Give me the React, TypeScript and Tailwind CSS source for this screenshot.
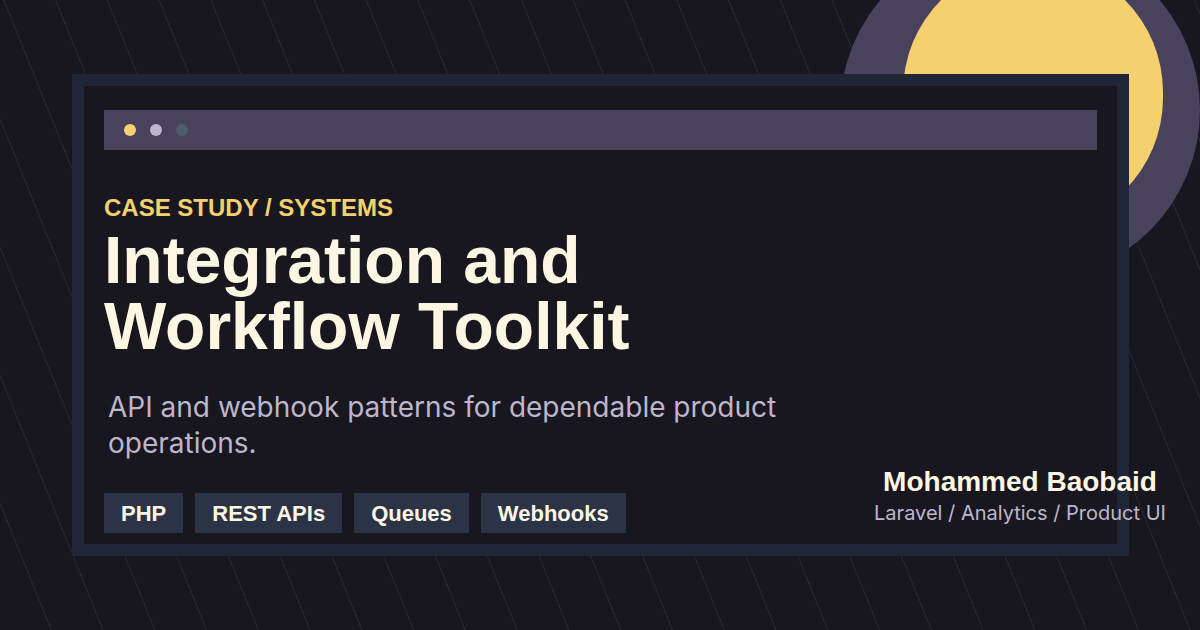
export default function App() {
    const tags = ["PHP", "REST APIs", "Queues", "Webhooks"];
    return (
        <div className="relative w-[1200px] h-[630px] overflow-hidden bg-[#18171f] bg-[repeating-linear-gradient(68deg,transparent_0px,transparent_47px,#222932_47px,#222932_48px)]">
            {/* decorative circles */}
            <div className="absolute left-[840px] top-[-60px] w-[360px] h-[340px] rounded-full bg-[#48425c]" />
            <div className="absolute left-[903px] top-[-38px] w-[260px] h-[266px] rounded-full bg-[#f4d06f]" />

            {/* card */}
            <div className="absolute left-[72px] top-[74px] w-[1057px] h-[482px] border-[12px] border-[#1f2636] bg-[#18171f] px-[20px] pt-[24px]">
                <div className="h-[40px] bg-[#48425c] flex items-center gap-[14px] pl-[20px]">
                    <span className="w-[12px] h-[12px] rounded-full bg-[#f4d06f]" />
                    <span className="w-[12px] h-[12px] rounded-full bg-[#bdb6cc]" />
                    <span className="w-[12px] h-[12px] rounded-full bg-[#4f5d6b]" />
                </div>
                <p className="mt-[43px] text-[24px] leading-[30px] font-bold text-[#f4d06f] font-[family-name:Liberation_Sans,Arial,sans-serif]">
                    CASE STUDY / SYSTEMS
                </p>
                <h1 className="mt-[4px] text-[66px] leading-[66px] font-bold text-[#fdf6e3] font-[family-name:Liberation_Sans,Arial,sans-serif]">
                    Integration and<br />Workflow Toolkit
                </h1>
                <p className="mt-[30px] ml-[4px] w-[740px] text-[28px] leading-[36px] text-[#bdb6cc] font-[family-name:Inter,sans-serif]">
                    API and webhook patterns for dependable product operations.
                </p>
                <div className="mt-[32px] flex gap-[12px]">
                    {tags.map((t) => (
                        <span
                            key={t}
                            className="h-[40px] px-[17px] flex items-center bg-[#2a3446] text-[22px] font-bold text-[#fdf6e3] font-[family-name:Liberation_Sans,Arial,sans-serif]"
                        >
                            {t}
                        </span>
                    ))}
                </div>
            </div>

            {/* author */}
            <div className="absolute left-[860px] top-[464px] w-[320px] flex flex-col items-center">
                <p className="text-[28px] leading-[36px] font-bold text-[#fdf6e3] font-[family-name:Liberation_Sans,Arial,sans-serif]">
                    Mohammed Baobaid
                </p>
                <p className="text-[20px] leading-[26px] text-[#bdb6cc] font-[family-name:Inter,sans-serif]">
                    Laravel / Analytics / Product UI
                </p>
            </div>
        </div>
    );
}
